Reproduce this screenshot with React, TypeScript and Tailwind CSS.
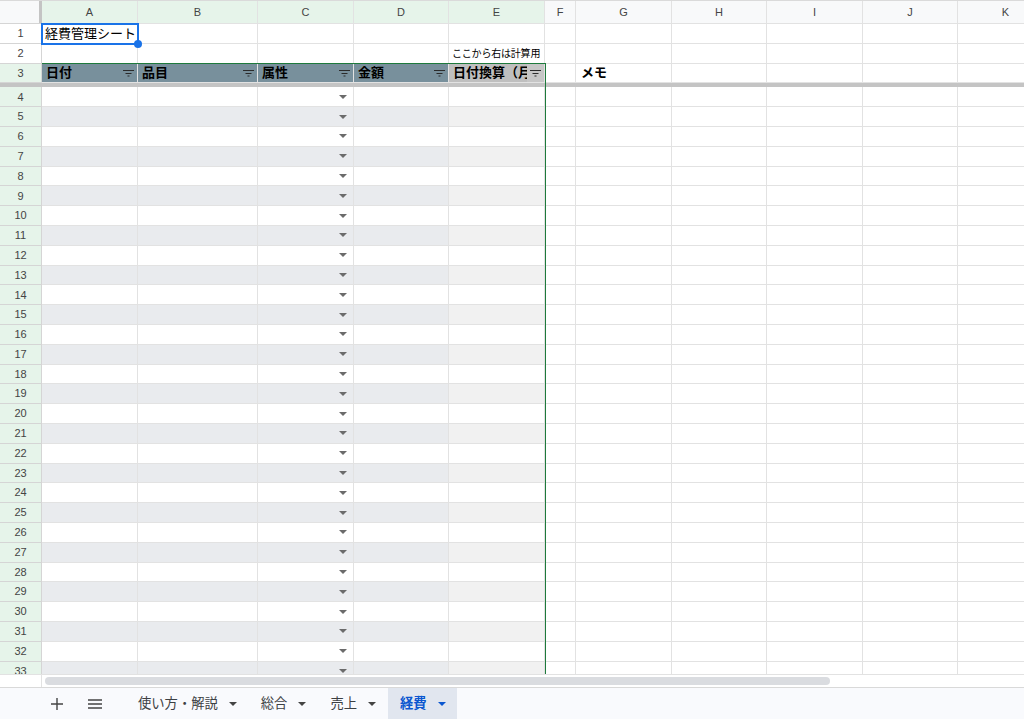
import React from "react";

const cols = [
  { id: "A", w: "w-[96px]", sel: true },
  { id: "B", w: "w-[120px]", sel: true },
  { id: "C", w: "w-[96px]", sel: true },
  { id: "D", w: "w-[95px]", sel: true },
  { id: "E", w: "w-[96px]", sel: true },
  { id: "F", w: "w-[31px]", sel: false },
  { id: "G", w: "w-[96px]", sel: false },
  { id: "H", w: "w-[95px]", sel: false },
  { id: "I", w: "w-[96px]", sel: false },
  { id: "J", w: "w-[95px]", sel: false },
  { id: "K", w: "w-[96px]", sel: false },
];

const headers = ["日付", "品目", "属性", "金額", "日付換算（月"];

const bodyRows = Array.from({ length: 30 }, (_, i) => i + 4);

function FilterIcon() {
  return (
    <svg width="11" height="8" viewBox="0 0 11 8" className="shrink-0">
      <path d="M0 1.5h11M2.5 4.5h6M4.5 7h2" stroke="#2b2b2b" strokeWidth="1.1" fill="none" />
    </svg>
  );
}

function Caret({ color = "#666" }: { color?: string }) {
  return (
    <svg width="8" height="4" viewBox="0 0 8 4" className="shrink-0">
      <path d="M0 0h8L4 4z" fill={color} />
    </svg>
  );
}

const cell = "shrink-0 h-full border-r border-b border-[#e2e2e2]";
const rowHead = "w-[42px] shrink-0 h-full border-r border-b border-[#d5d5d5] flex items-center justify-center text-[11px] text-[#444]";

function ColumnHeader() {
  return (
    <div className="flex h-[24px] border-t border-[#dadada]">
      <div className="w-[42px] shrink-0 h-full bg-[#f8f9fa] border-b border-[#d5d5d5] flex justify-end">
        <div className="w-[3px] h-full bg-[#c4c4c4]" />
      </div>
      {cols.map((c) => (
        <div
          key={c.id}
          className={`${c.w} ${cell} border-[#d5d5d5] flex items-center justify-center text-[11px] text-[#444] ${
            c.sel ? "bg-[#e6f4ea]" : "bg-[#f8f9fa]"
          }`}
        >
          {c.id}
        </div>
      ))}
    </div>
  );
}

function TopRow({ n }: { n: number }) {
  return (
    <div className="flex h-[19.8px]">
      <div className={`${rowHead} bg-white`}>{n}</div>
      {cols.map((c) => (
        <div key={c.id} className={`${c.w} ${cell} bg-white flex items-center overflow-hidden`}>
          {n === 1 && c.id === "A" && <span className="pl-[3px] text-[13px] text-black whitespace-nowrap">経費管理シート</span>}
          {n === 2 && c.id === "E" && (
            <span className="pl-[3px] text-[10px] text-black whitespace-nowrap tracking-[-0.2px]">ここから右は計算用</span>
          )}
        </div>
      ))}
    </div>
  );
}

function HeaderRow() {
  return (
    <div className="flex h-[19.8px]">
      <div className={`${rowHead} bg-[#e6f4ea]`}>3</div>
      {cols.map((c, i) => {
        if (i < 5) {
          const bg = i === 4 ? "bg-[#bfbfbf]" : "bg-[#78909c]";
          return (
            <div key={c.id} className={`${c.w} ${cell} ${bg} relative flex items-center overflow-hidden`}>
              <span className="pl-[4px] text-[13px] font-bold text-black whitespace-nowrap">{headers[i]}</span>
              <div className={`absolute right-0 top-0 h-full w-[17px] flex items-center justify-center ${i === 4 ? "bg-[#c6c6c6]" : bg}`}>
                <FilterIcon />
              </div>
            </div>
          );
        }
        return (
          <div key={c.id} className={`${c.w} ${cell} bg-white flex items-center`}>
            {c.id === "G" && <span className="pl-[5px] text-[13px] font-bold text-black">メモ</span>}
          </div>
        );
      })}
    </div>
  );
}

function BodyRow({ n }: { n: number }) {
  const banded = n % 2 === 1;
  return (
    <div className="flex h-[19.8px]">
      <div className={`${rowHead} bg-[#e6f4ea]`}>{n}</div>
      {cols.map((c, i) => {
        let bg = "bg-white";
        if (banded && i < 4) bg = "bg-[#e9ebee]";
        if (banded && i === 4) bg = "bg-[#f1f1f1]";
        return (
          <div key={c.id} className={`${c.w} ${cell} ${bg} flex items-center justify-end pr-[6px]`}>
            {c.id === "C" && <Caret color="#6b6b6b" />}
          </div>
        );
      })}
    </div>
  );
}

function TabBar() {
  const tabs = ["使い方・解説", "総合", "売上"];
  return (
    <div className="h-[32px] shrink-0 bg-[#f9fafd] border-t border-[#d9d9d9] flex items-stretch text-[13.3px] text-[#3c4043]">
      <div className="pl-[51px] flex items-center">
        <svg width="12" height="12" viewBox="0 0 12 12">
          <path d="M6 0v12M0 6h12" stroke="#444" strokeWidth="1.4" />
        </svg>
      </div>
      <div className="pl-[25px] flex items-center">
        <svg width="14" height="10" viewBox="0 0 14 10">
          <path d="M0 1h14M0 5h14M0 9h14" stroke="#444" strokeWidth="1.4" />
        </svg>
      </div>
      <div className="pl-[24px] flex items-stretch">
        {tabs.map((t) => (
          <div key={t} className="flex items-center gap-[11px] px-3">
            <span>{t}</span>
            <Caret color="#444" />
          </div>
        ))}
        <div className="flex items-center gap-[11px] pl-3 pr-[11px] bg-[#e1e6ef]">
          <span className="font-bold text-[#0b57d0]">経費</span>
          <Caret color="#0b57d0" />
        </div>
      </div>
    </div>
  );
}

export default function App() {
  return (
    <div className="h-[719px] w-[1024px] overflow-hidden flex flex-col bg-white font-[Liberation_Sans,Noto_Sans_CJK_JP,sans-serif]">
      <div className="relative flex-1 overflow-hidden">
        <ColumnHeader />
        <TopRow n={1} />
        <TopRow n={2} />
        <HeaderRow />
        <div className="h-[4px] bg-[#c4c4c4]" />
        {bodyRows.map((n) => (
          <BodyRow key={n} n={n} />
        ))}

        {/* table outline */}
        <div className="absolute left-[42px] top-[63px] w-[504px] h-[620px] border-t border-r border-[#1e7a3c] pointer-events-none" />
        {/* active cell A1 */}
        <div className="absolute left-[41px] top-[23px] w-[98px] h-[22px] border-2 border-[#1a73e8] pointer-events-none" />
        <div className="absolute left-[134px] top-[40px] w-[8px] h-[8px] rounded-full bg-[#1a73e8]" />
      </div>

      <div className="h-[13px] shrink-0 flex bg-white border-t border-[#e2e2e2]">
        <div className="w-[42px] shrink-0 border-r border-[#e2e2e2]" />
        <div className="flex-1 flex items-center pl-[3px]">
          <div className="w-[785px] h-[8px] rounded-full bg-[#dadce0]" />
        </div>
      </div>

      <TabBar />
    </div>
  );
}
